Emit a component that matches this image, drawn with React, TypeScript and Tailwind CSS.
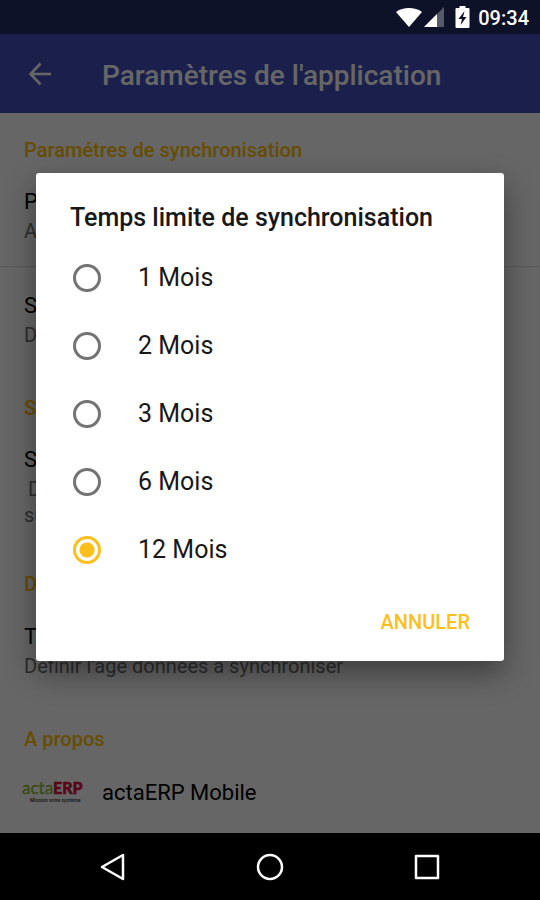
import { useState } from "react";
import type { ReactNode } from "react";

const durations = ["1 Mois", "2 Mois", "3 Mois", "6 Mois", "12 Mois"];

function StatusBar() {
  return (
    <header className="relative z-20 flex h-[34px] items-center justify-end pr-[11px] text-white">
      <svg className="mr-[2px] h-5 w-[26px]" viewBox="0 0 26 20" fill="currentColor">
        <path d="M13 20 0 5C4 2 8 1 13 1s9 1 13 4Z" />
      </svg>
      <svg className="mr-[11px] h-5 w-5" viewBox="0 0 20 20" fill="currentColor">
        <path d="M20 0v20H0Z" opacity="0.3" />
        <path d="M13 7v13H0Z" />
      </svg>
      <svg className="mr-2 h-[22px] w-[15px]" viewBox="0 0 14 22">
        <path
          fill="currentColor"
          d="M4 0h6v2h3a1 1 0 0 1 1 1v18a1 1 0 0 1-1 1H1a1 1 0 0 1-1-1V3a1 1 0 0 1 1-1h3Z"
        />
        <path fill="#0e1228" d="M9 5 3 13h3.500L5 19l6-8H7.500Z" />
      </svg>
      <span className="pt-[2px] text-[20px] leading-6 font-medium">09:34</span>
    </header>
  );
}

function AppBar() {
  return (
    <div className="flex h-[79px] items-center bg-[#4351bb] pl-7 text-white">
      <button type="button" aria-label="Retour" className="mr-[50px]">
        <svg className="h-6 w-6" viewBox="0 0 24 24" fill="none" stroke="currentColor" strokeWidth="2.600">
          <path d="M23 12H3M12.500 1.500 2.500 12l10 10.500" />
        </svg>
      </button>
      <h1 className="pt-1 text-[28px] leading-8 font-medium">Paramètres de l'application</h1>
    </div>
  );
}

function SectionTitle({ children }: { children: ReactNode }) {
  return <h2 className="text-[20px] leading-6 font-medium text-[#ffc107]">{children}</h2>;
}

function Preference({ title, children }: { title: string; children: ReactNode }) {
  return (
    <div>
      <h3 className="text-[22px] leading-8 text-black">{title}</h3>
      <p className="text-[20px] leading-[26px] text-[#747474]">{children}</p>
    </div>
  );
}

function Logo() {
  return (
    <svg className="-ml-[2px] h-[34px] w-[62px]" viewBox="0 0 62 34" role="img" aria-label="actaERP">
      <text x="0" y="19" fontSize="17" fill="#8fb935" stroke="#8fb935" strokeWidth="0.300" className="font-[Lato]">
        acta
      </text>
      <text
        x="31"
        y="19"
        fontSize="16"
        fontWeight="900"
        fill="#d8153c"
        stroke="#d8153c"
        strokeWidth="0.500"
        className="font-[Lato]"
      >
        ERP
      </text>
      <text x="8" y="27" fontSize="5" fontWeight="500" fill="#333">
        Mission votre système
      </text>
    </svg>
  );
}

function Settings() {
  return (
    <main className="flex-1 bg-white">
      <section className="border-b border-[#dcdcdc] px-6 pt-[25px] pb-[22px]">
        <SectionTitle>Paramétres de synchronisation</SectionTitle>
        <div className="pt-6">
          <Preference title="Paramètres">Adresse du serveur</Preference>
        </div>
      </section>
      <section className="px-6 pt-[23px]">
        <Preference title="Synchronisation">Définir la fréquence</Preference>
      </section>
      <section className="px-6 pt-12">
        <SectionTitle>Sécurité</SectionTitle>
        <div className="pt-6">
          <Preference title="Synchronisation">
            <span className="pl-1">Définir le mode de</span>
            <br />
            surveillance
          </Preference>
        </div>
      </section>
      <section className="px-6 pt-11">
        <SectionTitle>Données</SectionTitle>
        <div className="pt-[25px]">
          <Preference title="Temps limite">Définir l'age données à synchroniser</Preference>
        </div>
      </section>
      <section className="px-6 pt-12 pb-[22px]">
        <SectionTitle>A propos</SectionTitle>
        <div className="flex items-center gap-[18px] pt-6">
          <Logo />
          <h3 className="pt-[2px] text-[22px] leading-8 text-black">actaERP Mobile</h3>
        </div>
      </section>
    </main>
  );
}

function DurationDialog() {
  const [value, setValue] = useState("12 Mois");

  return (
    <div className="absolute inset-0 z-10 flex items-center justify-center bg-black/60 px-9">
      <div
        role="dialog"
        aria-labelledby="dialog-title"
        className="w-full rounded-[3px] bg-white px-[34px] pt-[29px] pb-[23px] shadow-[0_12px_30px_rgba(0,0,0,0.4)]"
      >
        <h2 id="dialog-title" className="mb-[10px] text-[25px] leading-8 font-medium text-[#181818]">
          Temps limite de synchronisation
        </h2>
        {durations.map((label) => (
          <label key={label} className="flex h-[68px] items-center gap-[37px] pl-[3px] text-[25px] text-[#181818]">
            <input
              type="radio"
              name="duration"
              value={label}
              checked={value === label}
              onChange={() => setValue(label)}
              className="h-7 w-7 appearance-none rounded-full border-3 border-[#737373] checked:border-[#fdbf1c] checked:bg-[radial-gradient(circle,#fdbf1c_7px,transparent_8px)]"
            />
            {label}
          </label>
        ))}
        <div className="flex justify-end pt-[22px]">
          <button type="button" className="text-[20px] leading-8 font-medium text-[#fdbf1c]">
            ANNULER
          </button>
        </div>
      </div>
    </div>
  );
}

function NavigationBar() {
  return (
    <nav className="flex h-[67px] items-center justify-center gap-[129px] bg-black text-white">
      <button type="button" aria-label="Précédent">
        <svg className="h-7 w-7" viewBox="0 0 28 28" fill="none" stroke="currentColor" strokeWidth="2.500" strokeLinejoin="round">
          <path d="M24 2v24L3 14Z" />
        </svg>
      </button>
      <button type="button" aria-label="Accueil">
        <svg className="h-7 w-7" viewBox="0 0 28 28" fill="none" stroke="currentColor" strokeWidth="2.500">
          <circle cx="14" cy="14" r="12" />
        </svg>
      </button>
      <button type="button" aria-label="Applications récentes">
        <svg className="h-7 w-7" viewBox="0 0 28 28" fill="none" stroke="currentColor" strokeWidth="2.500" strokeLinejoin="round">
          <path d="M3 3h22v22H3Z" />
        </svg>
      </button>
    </nav>
  );
}

export default function App() {
  return (
    <div className="flex min-h-screen flex-col font-[Roboto,sans-serif]">
      <div className="relative flex flex-1 flex-col bg-[#252e66]">
        <StatusBar />
        <AppBar />
        <Settings />
        <DurationDialog />
      </div>
      <NavigationBar />
    </div>
  );
}
